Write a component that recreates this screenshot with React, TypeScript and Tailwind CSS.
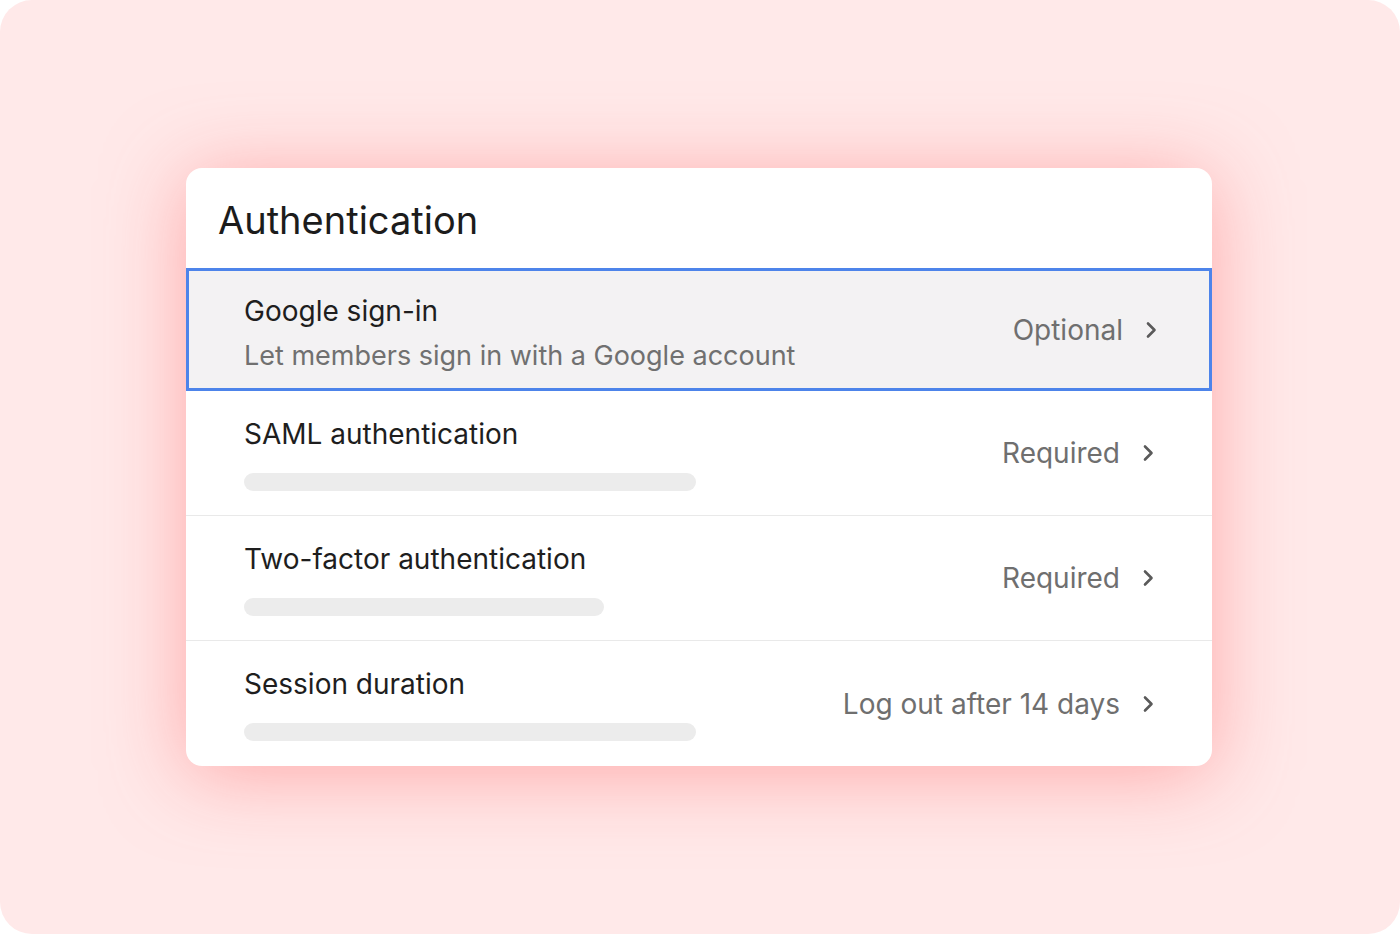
import React from "react";

const Chevron = () => (
  <svg width="12" height="18" viewBox="0 0 12 18" className="shrink-0">
    <polyline points="3,2.5 9.5,9 3,15.5" fill="none" stroke="#5a5a5a" strokeWidth="2.6" strokeLinecap="round" strokeLinejoin="round" />
  </svg>
);

const Row = ({ title, bar, value }: { title: string; bar: number; value: string }) => (
  <div className="flex items-center justify-between h-[125px] border-b border-[#e9e9e9] last:border-b-0 pl-[58px] pr-[58px]">
    <div className="flex flex-col">
      <div className="text-[28px] leading-[36px] text-[#1e1e1e]">{title}</div>
      <div className="mt-[21px] h-[18px] rounded-full bg-[#ececec]" style={{ width: bar }} />
    </div>
    <div className="flex items-center gap-[22px]">
      <span className="text-[28px] leading-[36px] text-[#6f6f6f]">{value}</span>
      <Chevron />
    </div>
  </div>
);

export default function App() {
  return (
    <div className="w-[1400px] h-[934px] bg-white" style={{ fontFamily: "Inter, 'Noto Sans', sans-serif" }}>
      <div className="w-full h-full rounded-[32px] bg-[#ffe9e9] flex items-center justify-center pr-[2px]">
        <div className="w-[1026px] bg-white rounded-[16px] shadow-[0_8px_80px_rgba(255,105,105,0.5)] overflow-hidden">
          <div className="pt-[29px] pb-[25px] pl-[32px] text-[38px] leading-[46px] text-[#1c1c1c]">Authentication</div>
          <div className="flex items-center justify-between h-[123px] border-[3px] border-[#4d84ea] bg-[#f3f2f3] pl-[55px] pr-[52px]">
            <div className="flex flex-col pt-[8px]">
              <div className="text-[28px] leading-[36px] text-[#1e1e1e]">Google sign-in</div>
              <div className="mt-[9px] text-[27px] leading-[36px] text-[#707070]">Let members sign in with a Google account</div>
            </div>
            <div className="flex items-center gap-[22px]">
              <span className="text-[28px] leading-[36px] text-[#6f6f6f]">Optional</span>
              <Chevron />
            </div>
          </div>
          <Row title="SAML authentication" bar={452} value="Required" />
          <Row title="Two-factor authentication" bar={360} value="Required" />
          <Row title="Session duration" bar={452} value="Log out after 14 days" />
        </div>
      </div>
    </div>
  );
}
